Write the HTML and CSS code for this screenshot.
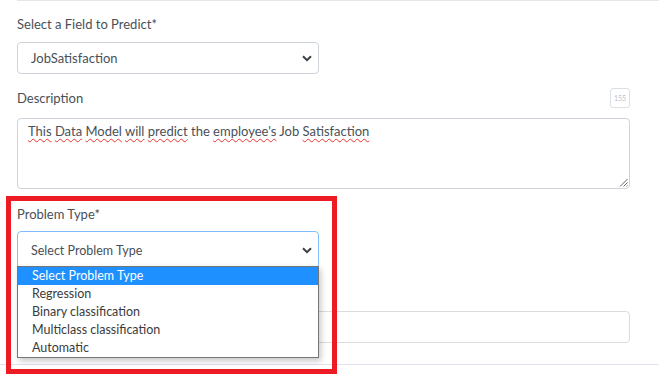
FILE: index.html
```html
<!DOCTYPE html>
<html lang="en">
<head>
  <meta charset="UTF-8" />
  <title>Data Model – Problem Type</title>
  <link rel="stylesheet" href="styles.css">
</head>
<body>
  <div id="page">
    <div class="top-rule"></div>

    <div id="form">
      <!-- Pole do przewidywania -->
      <div class="field f-predict">
        <div class="label">Select a Field to Predict*</div>
        <div class="select">
          <span>JobSatisfaction</span>
          <svg class="chevron" width="10" height="7" viewBox="0 0 10 7"><path d="M1 1.2 5 5.2 9 1.2" fill="none" stroke="#3a3f44" stroke-width="2"/></svg>
        </div>
      </div>

      <!-- Opis -->
      <div class="field f-desc">
        <div class="label-row">
          <span class="label">Description</span>
          <span class="counter">155</span>
        </div>
        <div class="textarea">
          <span class="typo">This</span> <span class="typo">Data</span> <span class="typo">Model</span> <span class="typo">will</span> <span class="typo">predict</span> the <span class="typo">employee's</span> Job <span class="typo">Satisfaction</span>
          <svg class="grip" width="9" height="9" viewBox="0 0 9 9"><path d="M8.5 1 1 8.5M8.5 4.5 4.5 8.5M8.5 7.5 7.5 8.5" stroke="#666" stroke-width="1"/></svg>
        </div>
      </div>

      <!-- Typ problemu -->
      <div class="field f-problem">
        <div class="label">Problem Type*</div>
        <div class="select-wrap">
          <div class="select focus">
            <span>Select Problem Type</span>
            <svg class="chevron" width="10" height="7" viewBox="0 0 10 7"><path d="M1 1.2 5 5.2 9 1.2" fill="none" stroke="#3a3f44" stroke-width="2"/></svg>
          </div>
          <ul class="options">
            <li class="active">Select Problem Type</li>
            <li>Regression</li>
            <li>Binary classification</li>
            <li>Multiclass classification</li>
            <li>Automatic</li>
          </ul>
        </div>
      </div>

      <div class="field f-hidden">
        <div class="label">&nbsp;</div>
        <div class="input"></div>
      </div>
    </div>

    <div class="bottom-rule"></div>

    <!-- ramka adnotacji -->
    <div class="annotation"></div>
  </div>
</body>
</html>
```

FILE: styles.css
```css
:root {
  --text: #495057;
  --border: #ced4da;
  --rule: #dee2e6;
  --radius: 4px;
  --highlight: #1e90ff;
  --mark: #ed1c24;
}
* { box-sizing: border-box; }
body {
  margin: 0;
  background: #fff;
  font-family: Lato, "Open Sans", sans-serif;
  font-size: 13px;
  color: var(--text);
}

#page { position: relative; width: 659px; height: 388px; overflow: hidden; }

.top-rule { margin-left: 17px; border-top: 1px solid #e4e6e8; }
.bottom-rule { border-top: 1px solid #dfe4ec; }

/* ===== Formularz ===== */
#form { width: 613px; margin-left: 17px; padding-top: 14px; }
.field { display: flex; flex-direction: column; }
.f-predict { gap: 9px; margin-bottom: 14px; }
.f-desc { gap: 10px; margin-bottom: 16px; }
.f-problem { gap: 8px; margin-bottom: 16px; }
.f-hidden { gap: 8px; margin-bottom: 21px; }

.label { line-height: 18px; }
.label-row { display: flex; justify-content: space-between; align-items: center; height: 20px; }
.counter {
  width: 20px; height: 20px;
  border: 1px solid #dcdfe3; border-radius: 3px;
  font-size: 7px; color: #b9c3cf;
  display: flex; align-items: center; justify-content: center;
}

/* ===== Select ===== */
.select {
  width: 302px; height: 32px;
  border: 1px solid var(--border); border-radius: var(--radius);
  display: flex; align-items: center; justify-content: space-between;
  padding: 0 6px 0 13px;
  font-size: 13px;
}
.select.focus { height: 38px; border-color: #80bdff; font-size: 12.5px; }
.chevron { margin-top: 1px; }

.select-wrap { position: relative; }
.options {
  position: absolute; top: 35px; left: 0;
  width: 302px; margin: 0; padding: 0; list-style: none;
  background: #fff; border: 1px solid #767676;
  box-shadow: 2px 3px 6px rgba(0, 0, 0, 0.22);
  color: #3b3b3b;
  font-size: 12.5px;
}
.options li { height: 18px; line-height: 18px; padding-left: 14px; }
.options li.active { background: var(--highlight); color: #fff; }

/* ===== Textarea ===== */
.textarea {
  position: relative;
  height: 71px;
  border: 1px solid var(--border); border-radius: var(--radius);
  padding: 3px 10px;
  line-height: 18px;
}
.typo { text-decoration: underline wavy #e33; text-decoration-thickness: 1px; text-underline-offset: 2px; }
.grip { position: absolute; right: 1px; bottom: 1px; }

.input { height: 32px; border: 1px solid #dcdcdc; border-radius: var(--radius); }

/* ===== Adnotacja ===== */
.annotation {
  position: absolute; left: 6px; top: 196px;
  width: 331px; height: 178px;
  border: 5px solid var(--mark);
}
```
